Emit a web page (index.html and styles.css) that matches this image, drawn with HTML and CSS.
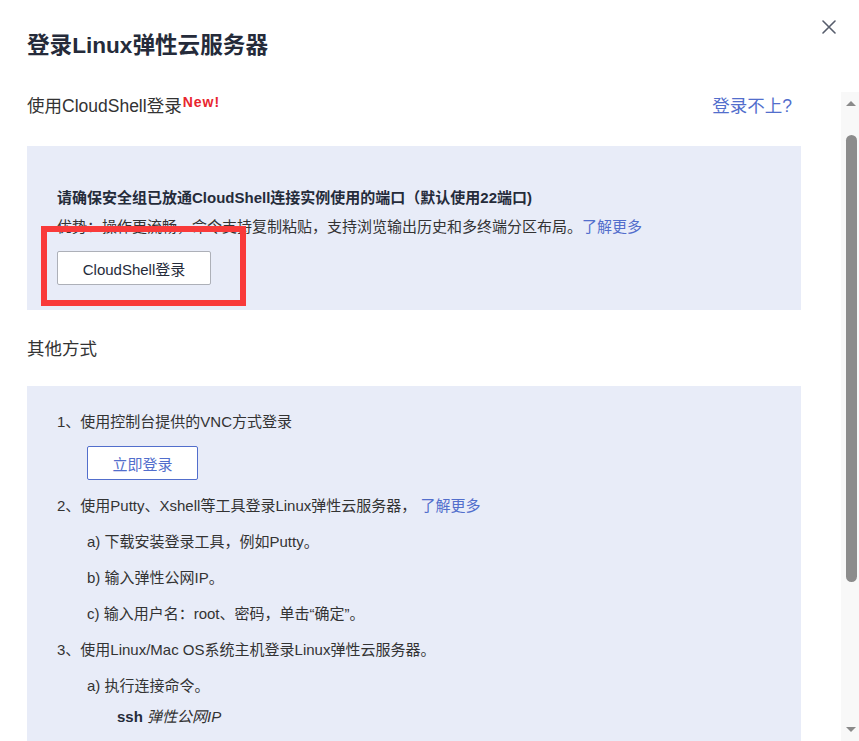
FILE: index.html
```html
<!DOCTYPE html>
<html lang="zh-CN">
<head>
<meta charset="utf-8">
<title>登录Linux弹性云服务器</title>
<link rel="stylesheet" href="styles.css">
</head>
<body>
<div class="dialog">
  <header class="dialog-head">
    <h1 class="dialog-title">登录Linux弹性云服务器</h1>
    <button class="close-btn" aria-label="关闭">
      <svg width="14" height="14" viewBox="0 0 14 14"><path d="M1 1L13 13M13 1L1 13" stroke="#575d6c" stroke-width="1.6" fill="none" stroke-linecap="round"/></svg>
    </button>
  </header>
  <div class="dialog-main">
    <div class="dialog-body">
      <div class="section-head">
        <span class="section-title">使用CloudShell登录<span class="badge-new">New!</span></span>
        <a class="help-link">登录不上?</a>
      </div>
      <div class="panel panel-cloud">
        <p class="line strong">请确保安全组已放通CloudShell连接实例使用的端口（默认使用22端口)</p>
        <p class="line">优势：操作更流畅，命令支持复制粘贴，支持浏览输出历史和多终端分区布局。<a class="link">了解更多</a></p>
        <div class="btn-wrap">
          <button class="btn btn-default">CloudShell登录</button>
          <span class="highlight-box"></span>
        </div>
      </div>
      <div class="section-head section-other">
        <span class="section-title">其他方式</span>
      </div>
      <div class="panel panel-other">
        <p class="item">1、使用控制台提供的VNC方式登录</p>
        <div class="indent vnc-btn">
          <button class="btn btn-primary-outline">立即登录</button>
        </div>
        <p class="item item-2">2、使用Putty、Xshell等工具登录Linux弹性云服务器， <a class="link">了解更多</a></p>
        <p class="item indent">a) 下载安装登录工具，例如Putty。</p>
        <p class="item indent">b) 输入弹性公网IP。</p>
        <p class="item indent">c) 输入用户名：root、密码，单击“确定”。</p>
        <p class="item">3、使用Linux/Mac OS系统主机登录Linux弹性云服务器。</p>
        <p class="item indent">a) 执行连接命令。</p>
        <p class="item indent2 cmd"><b>ssh</b> <i>弹性公网IP</i></p>
      </div>
    </div>
    <div class="scrollbar">
      <span class="sb-arrow sb-up"></span>
      <span class="sb-thumb"></span>
      <span class="sb-arrow sb-down"></span>
    </div>
  </div>
</div>
</body>
</html>
```
FILE: styles.css
```css
* { box-sizing: border-box; }
html, body { margin: 0; padding: 0; background: #fff; }
body {
  font-family: "Liberation Sans", "Noto Sans CJK SC", sans-serif;
  color: #333;
}
.dialog {
  width: 859px;
  height: 741px;
  overflow: hidden;
  display: flex;
  flex-direction: column;
}
.dialog-head {
  height: 92px;
  display: flex;
  justify-content: space-between;
  align-items: flex-start;
  padding-left: 27px;
  padding-right: 23px;
}
.dialog-title {
  margin: 30px 0 0;
  font-size: 22.6px;
  line-height: 31px;
  font-weight: bold;
  color: #252b3a;
}
.close-btn {
  margin-top: 20px;
  border: 0;
  background: none;
  padding: 0;
  width: 14px;
  height: 14px;
  display: block;
}
.close-btn svg { display: block; }
.dialog-main {
  flex: 1;
  display: flex;
  min-height: 0;
}
.dialog-body {
  width: 801px;
  padding-left: 27px;
  flex: none;
}
.section-head {
  display: flex;
  justify-content: space-between;
  align-items: center;
  height: 28px;
  padding-right: 9px;
}
.section-title {
  font-size: 17.5px;
  line-height: 28px;
  color: #333;
}
.badge-new {
  color: #e8262e;
  font-weight: bold;
  font-size: 14px;
  position: relative;
  top: -5px;
  margin-left: 1px;
  letter-spacing: 1px;
}
.help-link {
  font-size: 17.5px;
  line-height: 28px;
  color: #526ecc;
}
.panel {
  background: #e8ecf8;
  padding-left: 30px;
}
.panel-cloud {
  margin-top: 26px;
  padding-top: 37px;
  padding-bottom: 25px;
}
.line {
  margin: 0;
  font-size: 15px;
  line-height: 29px;
  color: #333;
}
.line.strong {
  font-weight: bold;
  color: #252b3a;
}
.link { color: #526ecc; }
.btn-wrap {
  position: relative;
  margin-top: 10px;
  width: 154px;
  height: 34px;
}
.btn {
  display: block;
  height: 34px;
  border-radius: 2px;
  background: #fff;
  font-family: "Liberation Sans", "Noto Sans CJK SC", sans-serif;
  font-size: 15px;
  padding: 0;
}
.btn-default {
  width: 154px;
  border: 1px solid #adb0b8;
  color: #252b3a;
}
.btn-primary-outline {
  width: 111px;
  border: 1px solid #526ecc;
  color: #526ecc;
}
.highlight-box {
  position: absolute;
  left: -16px;
  top: -25px;
  width: 205px;
  height: 80px;
  border: 6px solid #f93a3a;
  pointer-events: none;
}
.section-other { margin-top: 25px; }
.panel-other {
  margin-top: 23px;
  padding-top: 25px;
  padding-bottom: 30px;
}
.item {
  margin: 14px 0 0;
  font-size: 15px;
  line-height: 22px;
  color: #333;
}
.panel-other > .item:first-child { margin-top: 0; }
.indent { padding-left: 30px; }
.vnc-btn { margin-top: 13px; }
.item-2 { margin-top: 15px; }
.indent2 { padding-left: 60px; }
.cmd { margin-top: 9px; }
.cmd b { color: #252b3a; }
.scrollbar {
  margin-left: 40px;
  width: 18px;
  background: #f8f8f8;
  position: relative;
  display: flex;
  flex-direction: column;
  align-items: flex-end;
  padding-right: 2px;
}
.sb-arrow {
  width: 0;
  height: 0;
  border-left: 5px solid transparent;
  border-right: 5px solid transparent;
  margin-right: 1px;
}
.sb-up {
  margin-top: 9px;
  border-bottom: 5px solid #8a8a8a;
}
.sb-thumb {
  margin-top: 29px;
  width: 11px;
  height: 447px;
  background: #8c8c8c;
  border-radius: 6px;
}
.sb-down {
  margin-top: auto;
  margin-bottom: 9px;
  border-top: 5px solid #8a8a8a;
}
```
